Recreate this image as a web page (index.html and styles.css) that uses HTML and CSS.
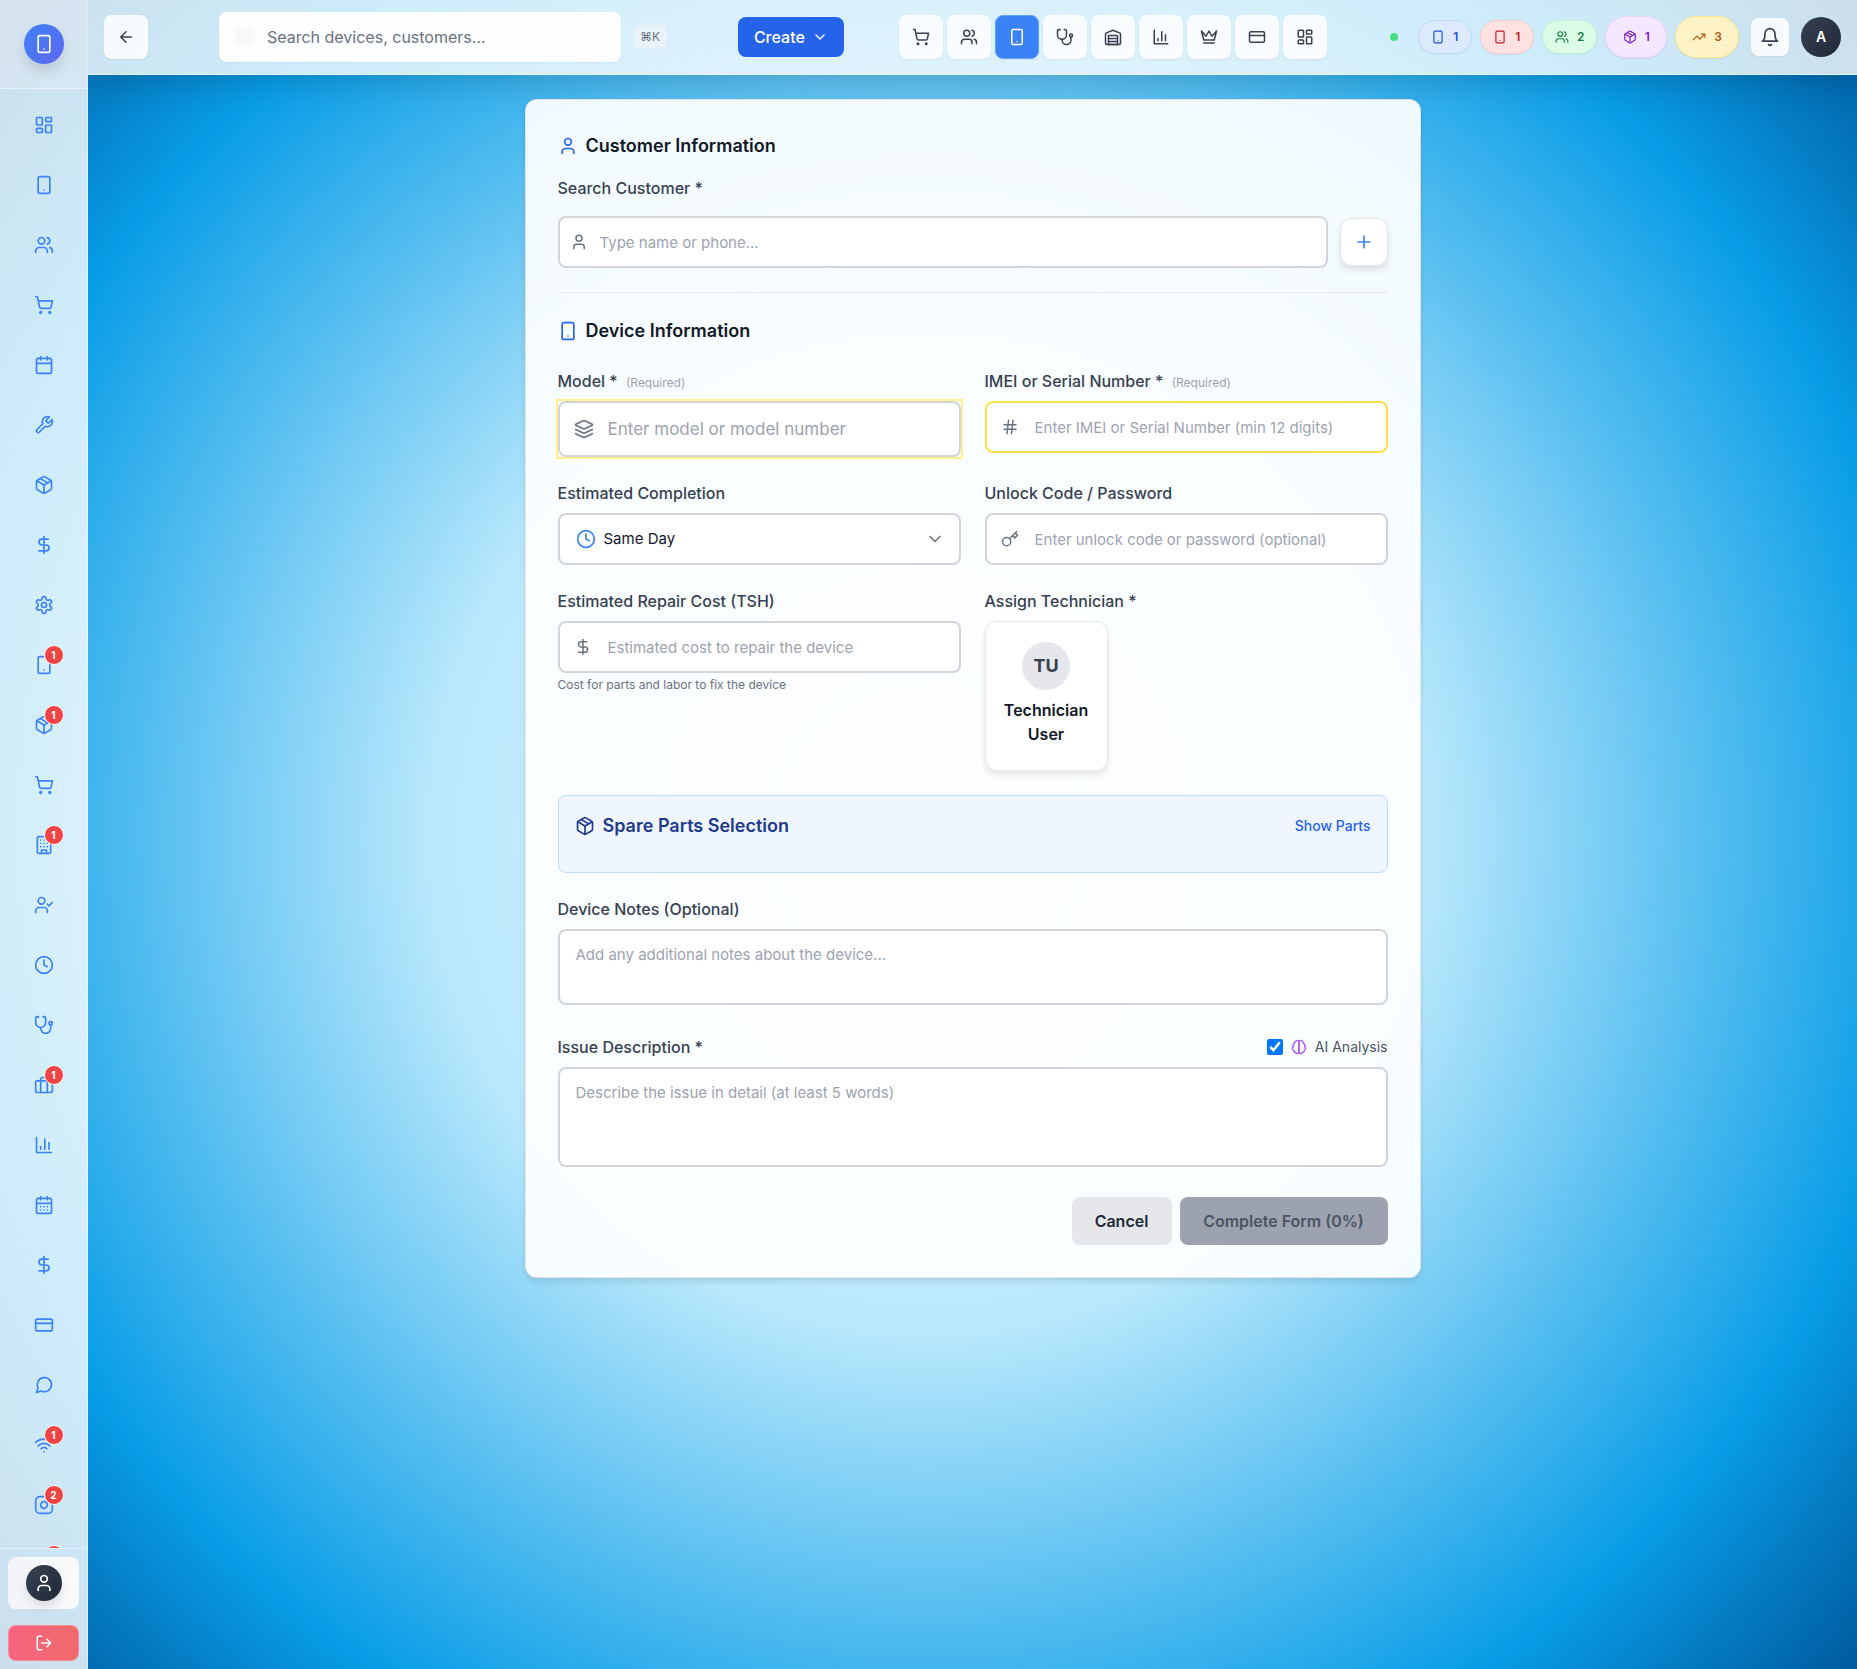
FILE: index.html
```html
<!DOCTYPE html>
<html lang="en">
<head>
<meta charset="utf-8">
<meta name="viewport" content="width=device-width, initial-scale=1">
<title>New Device</title>
<link rel="stylesheet" href="styles.css">
</head>
<body>
<svg class="sprite" aria-hidden="true">
  <symbol id="i-grid" viewBox="0 0 24 24"><rect x="3" y="3" width="7" height="9" rx="1"/><rect x="14" y="3" width="7" height="5" rx="1"/><rect x="14" y="12" width="7" height="9" rx="1"/><rect x="3" y="16" width="7" height="5" rx="1"/></symbol>
  <symbol id="i-phone" viewBox="0 0 24 24"><rect x="5" y="2" width="14" height="20" rx="2"/><path d="M12 18h.01"/></symbol>
  <symbol id="i-users" viewBox="0 0 24 24"><path d="M16 21v-2a4 4 0 0 0-4-4H6a4 4 0 0 0-4 4v2"/><circle cx="9" cy="7" r="4"/><path d="M22 21v-2a4 4 0 0 0-3-3.87"/><path d="M16 3.13a4 4 0 0 1 0 7.75"/></symbol>
  <symbol id="i-cart" viewBox="0 0 24 24"><circle cx="8" cy="21" r="1"/><circle cx="19" cy="21" r="1"/><path d="M2.05 2.05h2l2.66 12.42a2 2 0 0 0 2 1.58h9.78a2 2 0 0 0 1.95-1.57l1.65-7.43H5.12"/></symbol>
  <symbol id="i-calendar" viewBox="0 0 24 24"><rect x="3" y="4" width="18" height="18" rx="2"/><path d="M16 2v4M8 2v4M3 10h18"/></symbol>
  <symbol id="i-days" viewBox="0 0 24 24"><rect x="3" y="4" width="18" height="18" rx="2"/><path d="M16 2v4M8 2v4M3 10h18M8 14h.01M12 14h.01M16 14h.01M8 18h.01M12 18h.01M16 18h.01"/></symbol>
  <symbol id="i-wrench" viewBox="0 0 24 24"><path d="M14.7 6.3a1 1 0 0 0 0 1.4l1.6 1.6a1 1 0 0 0 1.4 0l3.77-3.77a6 6 0 0 1-7.94 7.94l-6.91 6.91a2.12 2.12 0 0 1-3-3l6.91-6.91a6 6 0 0 1 7.94-7.94l-3.76 3.76z"/></symbol>
  <symbol id="i-package" viewBox="0 0 24 24"><path d="m7.5 4.27 9 5.15"/><path d="M21 8a2 2 0 0 0-1-1.73l-7-4a2 2 0 0 0-2 0l-7 4A2 2 0 0 0 3 8v8a2 2 0 0 0 1 1.73l7 4a2 2 0 0 0 2 0l7-4A2 2 0 0 0 21 16Z"/><path d="m3.3 7 8.7 5 8.7-5"/><path d="M12 22V12"/></symbol>
  <symbol id="i-dollar" viewBox="0 0 24 24"><path d="M12 2v20"/><path d="M17 5H9.5a3.5 3.5 0 0 0 0 7h5a3.5 3.5 0 0 1 0 7H6"/></symbol>
  <symbol id="i-settings" viewBox="0 0 24 24"><path d="M12.22 2h-.44a2 2 0 0 0-2 2v.18a2 2 0 0 1-1 1.73l-.43.25a2 2 0 0 1-2 0l-.15-.08a2 2 0 0 0-2.73.73l-.22.38a2 2 0 0 0 .73 2.73l.15.1a2 2 0 0 1 1 1.72v.51a2 2 0 0 1-1 1.74l-.15.09a2 2 0 0 0-.73 2.73l.22.38a2 2 0 0 0 2.73.73l.15-.08a2 2 0 0 1 2 0l.43.25a2 2 0 0 1 1 1.73V20a2 2 0 0 0 2 2h.44a2 2 0 0 0 2-2v-.18a2 2 0 0 1 1-1.73l.43-.25a2 2 0 0 1 2 0l.15.08a2 2 0 0 0 2.73-.73l.22-.39a2 2 0 0 0-.73-2.73l-.15-.08a2 2 0 0 1-1-1.74v-.5a2 2 0 0 1 1-1.74l.15-.09a2 2 0 0 0 .73-2.73l-.22-.38a2 2 0 0 0-2.73-.73l-.15.08a2 2 0 0 1-2 0l-.43-.25a2 2 0 0 1-1-1.73V4a2 2 0 0 0-2-2z"/><circle cx="12" cy="12" r="3"/></symbol>
  <symbol id="i-building" viewBox="0 0 24 24"><rect x="4" y="2" width="16" height="20" rx="2"/><path d="M9 22v-4h6v4M8 6h.01M16 6h.01M12 6h.01M12 10h.01M12 14h.01M16 10h.01M16 14h.01M8 10h.01M8 14h.01"/></symbol>
  <symbol id="i-usercheck" viewBox="0 0 24 24"><path d="M16 21v-2a4 4 0 0 0-4-4H6a4 4 0 0 0-4 4v2"/><circle cx="9" cy="7" r="4"/><path d="m16 11 2 2 4-4"/></symbol>
  <symbol id="i-clock" viewBox="0 0 24 24"><circle cx="12" cy="12" r="10"/><path d="M12 6v6l4 2"/></symbol>
  <symbol id="i-steth" viewBox="0 0 24 24"><path d="M4.8 2.3A.3.3 0 1 0 5 2H4a2 2 0 0 0-2 2v5a6 6 0 0 0 12 0V4a2 2 0 0 0-2-2h-1a.2.2 0 1 0 .3.3"/><path d="M8 15v1a6 6 0 0 0 12 0v-4"/><circle cx="20" cy="10" r="2"/></symbol>
  <symbol id="i-case" viewBox="0 0 24 24"><rect x="2" y="7" width="20" height="14" rx="2"/><path d="M16 21V5a2 2 0 0 0-2-2h-4a2 2 0 0 0-2 2v16"/></symbol>
  <symbol id="i-chart" viewBox="0 0 24 24"><path d="M3 3v18h18M18 17V9M13 17V5M8 17v-3"/></symbol>
  <symbol id="i-card" viewBox="0 0 24 24"><rect x="2" y="5" width="20" height="14" rx="2"/><path d="M2 10h20"/></symbol>
  <symbol id="i-message" viewBox="0 0 24 24"><path d="m3 21 1.9-5.7a8.5 8.5 0 1 1 3.8 3.8z"/></symbol>
  <symbol id="i-wifi" viewBox="0 0 24 24"><path d="M5 13a10 10 0 0 1 14 0M8.5 16.5a5 5 0 0 1 7 0M2 8.820a15 15 0 0 1 20 0M12 20h.01"/></symbol>
  <symbol id="i-insta" viewBox="0 0 24 24"><rect x="2" y="2" width="20" height="20" rx="5"/><path d="M16 11.37A4 4 0 1 1 12.63 8 4 4 0 0 1 16 11.37z"/><path d="M17.5 6.5h.01"/></symbol>
  <symbol id="i-user" viewBox="0 0 24 24"><path d="M19 21v-2a4 4 0 0 0-4-4H9a4 4 0 0 0-4 4v2"/><circle cx="12" cy="7" r="4"/></symbol>
  <symbol id="i-logout" viewBox="0 0 24 24"><path d="M9 21H5a2 2 0 0 1-2-2V5a2 2 0 0 1 2-2h4M16 17l5-5-5-5M21 12H9"/></symbol>
  <symbol id="i-back" viewBox="0 0 24 24"><path d="m12 19-7-7 7-7M19 12H5"/></symbol>
  <symbol id="i-search" viewBox="0 0 24 24"><circle cx="11" cy="11" r="8"/><path d="m21 21-4.300-4.300"/></symbol>
  <symbol id="i-down" viewBox="0 0 24 24"><path d="m6 9 6 6 6-6"/></symbol>
  <symbol id="i-warehouse" viewBox="0 0 24 24"><path d="M22 8.350V20a2 2 0 0 1-2 2H4a2 2 0 0 1-2-2V8.350A2 2 0 0 1 3.260 6.500l8-3.200a2 2 0 0 1 1.480 0l8 3.200A2 2 0 0 1 22 8.350Z"/><path d="M6 18h12M6 14h12"/><rect x="6" y="10" width="12" height="12"/></symbol>
  <symbol id="i-crown" viewBox="0 0 24 24"><path d="m2 4 3 12h14l3-12-6 7-4-7-4 7-6-7zm3 16h14"/></symbol>
  <symbol id="i-trend" viewBox="0 0 24 24"><path d="m22 7-8.500 8.500-5-5L2 17"/><path d="M16 7h6v6"/></symbol>
  <symbol id="i-bell" viewBox="0 0 24 24"><path d="M6 8a6 6 0 0 1 12 0c0 7 3 9 3 9H3s3-2 3-9"/><path d="M10.300 21a1.940 1.940 0 0 0 3.400 0"/></symbol>
  <symbol id="i-plus" viewBox="0 0 24 24"><path d="M5 12h14M12 5v14"/></symbol>
  <symbol id="i-layers" viewBox="0 0 24 24"><path d="m12.830 2.180a2 2 0 0 0-1.660 0L2.600 6.080a1 1 0 0 0 0 1.830l8.580 3.910a2 2 0 0 0 1.660 0l8.580-3.900a1 1 0 0 0 0-1.830Z"/><path d="m22 17.650-9.170 4.160a2 2 0 0 1-1.660 0L2 17.650"/><path d="m22 12.650-9.170 4.160a2 2 0 0 1-1.660 0L2 12.650"/></symbol>
  <symbol id="i-hash" viewBox="0 0 24 24"><path d="M4 9h16M4 15h16M10 3 8 21M16 3l-2 18"/></symbol>
  <symbol id="i-key" viewBox="0 0 24 24"><circle cx="7.500" cy="15.500" r="5.500"/><path d="m21 2-9.600 9.600M15.500 7.500l3 3L22 7l-3-3"/></symbol>
  <symbol id="i-brain" viewBox="0 0 24 24"><path d="M9.500 2A2.500 2.500 0 0 1 12 4.500v15a2.500 2.500 0 0 1-4.960.440 2.500 2.500 0 0 1-2.960-3.080 3 3 0 0 1-.340-5.580 2.500 2.500 0 0 1 1.320-4.240 2.500 2.500 0 0 1 1.980-3A2.500 2.500 0 0 1 9.500 2Z"/><path d="M14.500 2A2.500 2.500 0 0 0 12 4.500v15a2.500 2.500 0 0 0 4.960.440 2.500 2.500 0 0 0 2.960-3.080 3 3 0 0 0 .340-5.580 2.500 2.500 0 0 0-1.320-4.240 2.500 2.500 0 0 0-1.980-3A2.500 2.500 0 0 0 14.500 2Z"/></symbol>
</svg>

<div class="app">
  <aside class="sidebar">
    <div class="brand"><span class="brand-mark"><svg class="icon"><use href="#i-phone"/></svg></span></div>
    <nav class="side-nav" aria-label="Main">
      <a href="#" aria-label="Dashboard"><svg class="icon"><use href="#i-grid"/></svg></a>
      <a href="#" aria-label="Devices"><svg class="icon"><use href="#i-phone"/></svg></a>
      <a href="#" aria-label="Customers"><svg class="icon"><use href="#i-users"/></svg></a>
      <a href="#" aria-label="Point of sale"><svg class="icon"><use href="#i-cart"/></svg></a>
      <a href="#" aria-label="Appointments"><svg class="icon"><use href="#i-calendar"/></svg></a>
      <a href="#" aria-label="Services"><svg class="icon"><use href="#i-wrench"/></svg></a>
      <a href="#" aria-label="Inventory"><svg class="icon"><use href="#i-package"/></svg></a>
      <a href="#" aria-label="Finance"><svg class="icon"><use href="#i-dollar"/></svg></a>
      <a href="#" aria-label="Settings"><svg class="icon"><use href="#i-settings"/></svg></a>
      <a href="#" aria-label="Repairs"><svg class="icon"><use href="#i-phone"/></svg><span class="badge">1</span></a>
      <a href="#" aria-label="Spare parts"><svg class="icon"><use href="#i-package"/></svg><span class="badge">1</span></a>
      <a href="#" aria-label="Orders"><svg class="icon"><use href="#i-cart"/></svg></a>
      <a href="#" aria-label="Suppliers"><svg class="icon"><use href="#i-building"/></svg><span class="badge">1</span></a>
      <a href="#" aria-label="Attendance"><svg class="icon"><use href="#i-usercheck"/></svg></a>
      <a href="#" aria-label="History"><svg class="icon"><use href="#i-clock"/></svg></a>
      <a href="#" aria-label="Diagnostics"><svg class="icon"><use href="#i-steth"/></svg></a>
      <a href="#" aria-label="Business"><svg class="icon"><use href="#i-case"/></svg><span class="badge">1</span></a>
      <a href="#" aria-label="Reports"><svg class="icon"><use href="#i-chart"/></svg></a>
      <a href="#" aria-label="Schedule"><svg class="icon"><use href="#i-days"/></svg></a>
      <a href="#" aria-label="Payroll"><svg class="icon"><use href="#i-dollar"/></svg></a>
      <a href="#" aria-label="Payments"><svg class="icon"><use href="#i-card"/></svg></a>
      <a href="#" aria-label="Messages"><svg class="icon"><use href="#i-message"/></svg></a>
      <a href="#" aria-label="Network"><svg class="icon"><use href="#i-wifi"/></svg><span class="badge">1</span></a>
      <a href="#" aria-label="Instagram"><svg class="icon"><use href="#i-insta"/></svg><span class="badge">2</span></a>
      <a href="#" aria-label="Chat"><svg class="icon"><use href="#i-message"/></svg><span class="badge"></span></a>
    </nav>
    <div class="side-foot">
      <button class="profile" type="button" aria-label="Profile"><span class="profile-mark"><svg class="icon"><use href="#i-user"/></svg></span></button>
      <button class="logout" type="button" aria-label="Log out"><svg class="icon"><use href="#i-logout"/></svg></button>
    </div>
  </aside>

  <div class="page">
    <header class="topbar">
      <button class="tile" type="button" aria-label="Back"><svg class="icon"><use href="#i-back"/></svg></button>
      <div class="search-area">
        <div class="search">
          <svg class="icon"><use href="#i-search"/></svg>
          <input type="search" aria-label="Search" placeholder="Search devices, customers...">
        </div>
        <kbd>⌘K</kbd>
      </div>
      <div class="actions">
        <button class="create" type="button">Create <svg class="icon"><use href="#i-down"/></svg></button>
        <nav class="shortcuts" aria-label="Shortcuts">
          <a class="tile" href="#" aria-label="Sales"><svg class="icon"><use href="#i-cart"/></svg></a>
          <a class="tile" href="#" aria-label="Customers"><svg class="icon"><use href="#i-users"/></svg></a>
          <a class="tile active" href="#" aria-label="Devices"><svg class="icon"><use href="#i-phone"/></svg></a>
          <a class="tile" href="#" aria-label="Diagnostics"><svg class="icon"><use href="#i-steth"/></svg></a>
          <a class="tile" href="#" aria-label="Storage"><svg class="icon"><use href="#i-warehouse"/></svg></a>
          <a class="tile" href="#" aria-label="Reports"><svg class="icon"><use href="#i-chart"/></svg></a>
          <a class="tile" href="#" aria-label="Loyalty"><svg class="icon"><use href="#i-crown"/></svg></a>
          <a class="tile" href="#" aria-label="Payments"><svg class="icon"><use href="#i-card"/></svg></a>
          <a class="tile" href="#" aria-label="Dashboard"><svg class="icon"><use href="#i-grid"/></svg></a>
        </nav>
      </div>
      <div class="status">
        <span class="online"></span>
        <div class="pills">
          <span class="pill blue"><svg class="icon"><use href="#i-phone"/></svg>1</span>
          <span class="pill red"><svg class="icon"><use href="#i-phone"/></svg>1</span>
          <span class="pill green"><svg class="icon"><use href="#i-users"/></svg>2</span>
          <span class="pill large purple"><svg class="icon"><use href="#i-package"/></svg>1</span>
          <span class="pill large amber"><svg class="icon"><use href="#i-trend"/></svg>3</span>
        </div>
        <button class="tile bell" type="button" aria-label="Notifications"><svg class="icon"><use href="#i-bell"/></svg></button>
        <button class="avatar" type="button">A</button>
      </div>
    </header>

    <main class="content">
      <form class="card">
        <section class="customer">
          <h2 class="heading"><svg class="icon"><use href="#i-user"/></svg>Customer Information</h2>
          <label class="label" for="customer">Search Customer *</label>
          <div class="customer-row">
            <div class="control tight">
              <svg class="icon"><use href="#i-user"/></svg>
              <input class="input" id="customer" type="text" placeholder="Type name or phone...">
            </div>
            <button class="add" type="button" aria-label="Add customer"><svg class="icon"><use href="#i-plus"/></svg></button>
          </div>
        </section>

        <section class="device">
          <h2 class="heading"><svg class="icon"><use href="#i-phone"/></svg>Device Information</h2>
          <div class="fields">
            <div class="field">
              <label class="label" for="model">Model * <small>(Required)</small></label>
              <div class="control tall">
                <svg class="icon"><use href="#i-layers"/></svg>
                <input class="input" id="model" type="text" placeholder="Enter model or model number">
              </div>
            </div>
            <div class="field">
              <label class="label" for="imei">IMEI or Serial Number * <small>(Required)</small></label>
              <div class="control">
                <svg class="icon"><use href="#i-hash"/></svg>
                <input class="input warn" id="imei" type="text" placeholder="Enter IMEI or Serial Number (min 12 digits)">
              </div>
            </div>
            <div class="field">
              <label class="label" for="completion">Estimated Completion</label>
              <div class="control picker">
                <svg class="icon"><use href="#i-clock"/></svg>
                <select class="input" id="completion"><option>Same Day</option><option>Tomorrow</option></select>
                <svg class="icon caret"><use href="#i-down"/></svg>
              </div>
            </div>
            <div class="field">
              <label class="label" for="unlock">Unlock Code / Password</label>
              <div class="control">
                <svg class="icon"><use href="#i-key"/></svg>
                <input class="input" id="unlock" type="text" placeholder="Enter unlock code or password (optional)">
              </div>
            </div>
            <div class="field">
              <label class="label" for="cost">Estimated Repair Cost (TSH)</label>
              <div class="control">
                <svg class="icon"><use href="#i-dollar"/></svg>
                <input class="input" id="cost" type="text" placeholder="Estimated cost to repair the device">
              </div>
              <p class="hint">Cost for parts and labor to fix the device</p>
            </div>
            <div class="field">
              <span class="label" id="tech-label">Assign Technician *</span>
              <button class="tech" type="button" aria-describedby="tech-label"><span class="initials">TU</span><span>Technician User</span></button>
            </div>
          </div>
        </section>

        <section class="parts">
          <h2 class="heading"><svg class="icon"><use href="#i-package"/></svg>Spare Parts Selection</h2>
          <button class="show" type="button">Show Parts</button>
        </section>

        <div class="field">
          <label class="label" for="notes">Device Notes (Optional)</label>
          <textarea class="input notes" id="notes" placeholder="Add any additional notes about the device..."></textarea>
        </div>

        <div class="field issue">
          <div class="issue-head">
            <label class="label" for="issue">Issue Description *</label>
            <label class="ai"><input type="checkbox" checked><svg class="icon"><use href="#i-brain"/></svg>AI Analysis</label>
          </div>
          <textarea class="input describe" id="issue" placeholder="Describe the issue in detail (at least 5 words)"></textarea>
        </div>

        <div class="submit-row">
          <button class="btn" type="button">Cancel</button>
          <button class="btn primary" type="submit" disabled>Complete Form (0%)</button>
        </div>
      </form>
    </main>
  </div>
</div>
</body>
</html>
```
FILE: styles.css
```css
*, *::before, *::after { box-sizing: border-box; }

body {
  margin: 0;
  min-height: 100vh;
  font: 400 16px/24px Inter, "Liberation Sans", sans-serif;
  color: #111827;
  background: radial-gradient(circle at center, #ebf9ff 0%, #b8e8fc 40%, #089de7 80%, #005a9e 100%) fixed;
}

button, input, select, textarea { font: inherit; color: inherit; }
button { padding: 0; border: 0; cursor: pointer; }
h2, p { margin: 0; }

.sprite { position: absolute; width: 0; height: 0; }
.icon {
  flex: none;
  width: 18px;
  height: 18px;
  fill: none;
  stroke: currentColor;
  stroke-width: 2;
  stroke-linecap: round;
  stroke-linejoin: round;
}

.app { display: grid; grid-template-columns: 88px minmax(0, 1fr); min-height: 100vh; }

/* Sidebar */
.sidebar {
  position: sticky;
  top: 0;
  height: 100vh;
  display: flex;
  flex-direction: column;
  background: rgba(255, 255, 255, .8);
  border-right: 1px solid rgba(255, 255, 255, .4);
}
.brand {
  flex: none;
  display: flex;
  justify-content: center;
  padding: 24px 0;
  background: rgba(240, 240, 245, .3);
  border-bottom: 1px solid rgba(255, 255, 255, .5);
}
.brand-mark {
  display: grid;
  place-items: center;
  width: 40px;
  height: 40px;
  border-radius: 50%;
  color: #fff;
  background: linear-gradient(135deg, #3b82f6, #6366f1);
  box-shadow: 0 8px 14px rgba(0, 0, 0, .12);
}
.brand-mark .icon, .side-nav .icon { width: 20px; height: 20px; }
.side-nav {
  flex: 1;
  min-height: 0;
  overflow: hidden;
  display: flex;
  flex-direction: column;
  gap: 8px;
  padding: 10px 8px;
}
.side-nav a {
  position: relative;
  flex: none;
  display: grid;
  place-items: center;
  height: 52px;
  color: #3b82f6;
}
.badge {
  position: absolute;
  top: 6px;
  left: 50%;
  width: 20px;
  height: 20px;
  border: 1px solid #fff;
  border-radius: 50%;
  background: #ef4444;
  color: #fff;
  font-size: 10px;
  font-weight: 700;
  line-height: 18px;
  text-align: center;
}
.side-foot {
  flex: none;
  display: flex;
  flex-direction: column;
  gap: 16px;
  padding: 8px;
  border-top: 1px solid rgba(255, 255, 255, .4);
}
.profile {
  display: grid;
  place-items: center;
  height: 52px;
  border-radius: 8px;
  background: linear-gradient(90deg, #f2f4f7, #f8fafc);
}
.profile-mark {
  display: grid;
  place-items: center;
  width: 36px;
  height: 36px;
  border-radius: 50%;
  color: #fff;
  background: linear-gradient(135deg, #374151, #1f2937);
  box-shadow: 0 6px 10px rgba(0, 0, 0, .1);
}
.profile .icon { width: 20px; height: 20px; }
.logout {
  display: grid;
  place-items: center;
  height: 36px;
  border-radius: 8px;
  border: 1px solid rgba(255, 255, 255, .25);
  color: #fff;
  background: linear-gradient(90deg, #f66380, #f06a6a);
}

/* Top bar */
.page { min-width: 0; }
.topbar {
  display: flex;
  align-items: center;
  height: 75px;
  padding: 0 16px;
  background: rgba(255, 255, 255, .8);
  border-bottom: 1px solid rgba(255, 255, 255, .5);
  box-shadow: 0 8px 32px rgba(0, 0, 0, .15);
}
.tile {
  flex: none;
  display: grid;
  place-items: center;
  width: 44px;
  height: 44px;
  border-radius: 8px;
  color: #374151;
  background: rgba(255, 255, 255, .85);
  box-shadow: 0 1px 2px rgba(0, 0, 0, .06);
}
.tile.active { color: #fff; background: #3b82f6; border: 1px solid #60a5fa; }
.search-area {
  flex: 1;
  min-width: 0;
  display: flex;
  align-items: center;
  justify-content: center;
  gap: 12px;
}
.search {
  display: flex;
  align-items: center;
  gap: 12px;
  width: 402px;
  height: 50px;
  padding: 0 16px;
  border-radius: 8px;
  background: #fdfeff;
  box-shadow: 0 1px 2px rgba(0, 0, 0, .05);
}
.search .icon { width: 20px; height: 20px; color: #f4f5f7; filter: drop-shadow(0 0 4px #e5e7eb); }
.search input {
  flex: 1;
  min-width: 0;
  padding: 0;
  border: 0;
  outline: 0;
  background: none;
  appearance: none;
}
.search input::placeholder { color: #6b7280; }
kbd {
  width: 34px;
  border-radius: 6px;
  font: 400 12px/24px Inter, "DejaVu Sans", sans-serif;
  text-align: center;
  color: #6b7280;
  background: rgba(243, 244, 246, .6);
}
.actions { flex: none; display: flex; align-items: center; gap: 55px; }
.create {
  display: flex;
  align-items: center;
  justify-content: space-between;
  width: 106px;
  height: 40px;
  padding: 0 16px;
  border-radius: 8px;
  font-weight: 500;
  color: #fff;
  background: #2563eb;
}
.create .icon { width: 16px; height: 16px; }
.shortcuts { display: flex; gap: 4px; }
.status { flex: none; display: flex; align-items: center; gap: 12px; margin-left: 63px; }
.online { width: 8px; height: 8px; margin-right: 8px; border-radius: 50%; background: #4ade80; }
.pills { display: flex; align-items: center; gap: 8px; }
.pill {
  display: flex;
  align-items: center;
  justify-content: center;
  gap: 8px;
  min-width: 54px;
  height: 34px;
  padding: 0 12px;
  border: 1px solid;
  border-radius: 999px;
  font-size: 12px;
  font-weight: 600;
  box-shadow: 0 1px 2px rgba(0, 0, 0, .05);
}
.pill.large { min-width: 62px; height: 42px; padding: 0 16px; }
.pill .icon { width: 14px; height: 14px; }
.blue { color: #1d4ed8; background: #dbeafe; border-color: #bfdbfe; }
.red { color: #b91c1c; background: #fee2e2; border-color: #fecaca; }
.green { color: #15803d; background: #dcfce7; border-color: #bbf7d0; }
.purple { color: #7e22ce; background: #f3e8ff; border-color: #e9d5ff; }
.amber { color: #b45309; background: #fef3c7; border-color: #fde68a; }
.bell { width: 38px; height: 38px; }
.bell .icon { width: 20px; height: 20px; }
.avatar {
  width: 40px;
  height: 40px;
  border-radius: 50%;
  color: #fff;
  font-size: 14px;
  font-weight: 600;
  background: linear-gradient(135deg, #374151, #1f2937);
}

/* Form card */
.content { padding: 24px; }
.card {
  max-width: 896px;
  margin: 0 auto;
  padding: 32px;
  display: flex;
  flex-direction: column;
  gap: 24px;
  border: 1px solid rgba(209, 213, 219, .6);
  border-radius: 12px;
  background: rgba(255, 255, 255, .92);
  box-shadow: 0 4px 6px rgba(0, 0, 0, .1);
}
.heading { display: flex; align-items: center; gap: 8px; font-size: 18px; line-height: 28px; font-weight: 600; }
.heading .icon { width: 20px; height: 20px; color: #2563eb; }
.customer {
  display: flex;
  flex-direction: column;
  gap: 16px;
  padding-bottom: 24px;
  border-bottom: 1px solid #e5e7eb;
}
.customer-row { display: flex; align-items: center; gap: 12px; }
.customer-row .control { flex: 1; }
.label { display: block; font-weight: 500; color: #374151; }
.label small { margin-left: 4px; font-size: 12px; line-height: 16px; font-weight: 400; color: #9ca3af; }
.device { display: flex; flex-direction: column; gap: 24px; }
.fields { display: grid; grid-template-columns: repeat(2, minmax(0, 1fr)); gap: 24px; align-items: start; }
.field { display: flex; flex-direction: column; gap: 8px; }

.control { display: grid; align-items: center; }
.control > * { grid-area: 1 / 1; }
.control > .icon { margin-left: 16px; color: #6b7280; pointer-events: none; z-index: 1; }
.control.tight > .icon { margin-left: 12px; }
.input {
  width: 100%;
  height: 52px;
  padding: 0 16px 0 48px;
  border: 2px solid #d1d5db;
  border-radius: 8px;
  font-size: 15px;
  background: #fff;
  outline: 0;
}
.input::placeholder { color: #9ca3af; opacity: 1; }
.tight .input { padding-left: 40px; }
.input.warn { border-color: #fde047; }
.tall { box-shadow: 0 0 0 2px #fef08a; }
.tall .input { height: 56px; font-size: 17px; }
.tall > .icon { width: 20px; height: 20px; }
.picker .input { padding-left: 44px; appearance: none; }
.picker > .icon { width: 20px; height: 20px; margin-left: 18px; color: #3b82f6; }
.picker > .icon.caret { justify-self: end; margin: 0 16px 0 0; color: #6b7280; }
.add {
  display: grid;
  place-items: center;
  width: 48px;
  height: 48px;
  border: 1px solid #e5e7eb;
  border-radius: 12px;
  color: #3b82f6;
  background: #fff;
  box-shadow: 0 4px 6px rgba(0, 0, 0, .1);
}
.add .icon { width: 20px; height: 20px; }
.hint { margin-top: -4px; font-size: 12px; line-height: 16px; color: #6b7280; }
.tech {
  display: flex;
  flex-direction: column;
  align-items: center;
  gap: 8px;
  width: 123px;
  padding: 20px 12px 24px;
  border: 1px solid #e5e7eb;
  border-radius: 12px;
  font-weight: 600;
  background: #fff;
  box-shadow: 0 4px 6px rgba(0, 0, 0, .1);
}
.initials {
  width: 48px;
  height: 48px;
  border-radius: 50%;
  font-size: 18px;
  font-weight: 700;
  line-height: 48px;
  color: #374151;
  background: #e5e7eb;
}
.parts {
  display: flex;
  align-items: center;
  justify-content: space-between;
  padding: 16px 16px 32px;
  border: 1px solid #bfdbfe;
  border-radius: 8px;
  background: #eff6ff;
}
.parts .heading, .parts .heading .icon { color: #1e3a8a; }
.show { font-size: 14px; font-weight: 500; color: #2563eb; background: none; }
textarea.input { display: block; padding: 12px 16px; resize: none; }
textarea.notes { height: 76px; }
textarea.describe { height: 100px; }
.issue { margin: 6px 0; }
.issue-head { display: flex; align-items: center; justify-content: space-between; }
.ai { display: flex; align-items: center; gap: 8px; font-size: 14px; color: #4b5563; }
.ai input { width: 16px; height: 16px; margin: 0; accent-color: #0075ff; }
.ai .icon { width: 16px; height: 16px; color: #a855f7; }
.submit-row { display: flex; justify-content: flex-end; gap: 8px; }
.btn {
  min-width: 100px;
  height: 48px;
  padding: 0 22px;
  border-radius: 8px;
  font-weight: 600;
  color: #1f2937;
  background: #e5e7eb;
}
.btn.primary { min-width: 208px; color: #4b5563; background: #9ca3af; cursor: default; }
```
